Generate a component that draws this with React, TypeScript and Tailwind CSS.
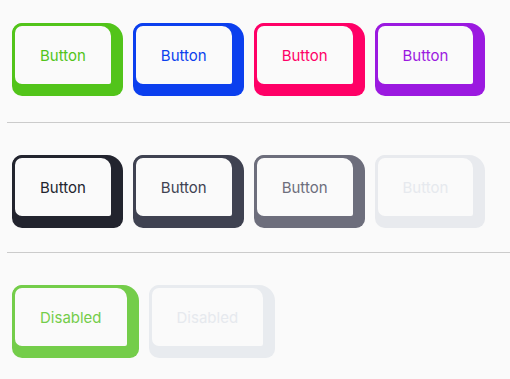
import React from 'react';

type Tone = {
  label: string;
  outer: string;
  border: string;
  text: string;
};

const rows: Tone[][] = [
  [
    { label: 'Button', outer: 'bg-[#52c41a]', border: 'border-[#52c41a]', text: 'text-[#52c41a]' },
    { label: 'Button', outer: 'bg-[#0b3fee]', border: 'border-[#0b3fee]', text: 'text-[#0b3fee]' },
    { label: 'Button', outer: 'bg-[#ff0066]', border: 'border-[#ff0066]', text: 'text-[#ff0066]' },
    { label: 'Button', outer: 'bg-[#9b19e0]', border: 'border-[#9b19e0]', text: 'text-[#9b19e0]' },
  ],
  [
    { label: 'Button', outer: 'bg-[#22242e]', border: 'border-[#22242e]', text: 'text-[#22242e]' },
    { label: 'Button', outer: 'bg-[#3f4251]', border: 'border-[#3f4251]', text: 'text-[#3f4251]' },
    { label: 'Button', outer: 'bg-[#6d6e7c]', border: 'border-[#6d6e7c]', text: 'text-[#6d6e7c]' },
    { label: 'Button', outer: 'bg-[#e8eaee]', border: 'border-[#e8eaee]', text: 'text-[#e6e9ee]' },
  ],
  [
    { label: 'Disabled', outer: 'bg-[#74cd4a]', border: 'border-[#74cd4a]', text: 'text-[#74cd4a]' },
    { label: 'Disabled', outer: 'bg-[#e8ebef]', border: 'border-[#e8ebef]', text: 'text-[#e6e9ee]' },
  ],
];

const ChunkyButton = ({ tone }: { tone: Tone }) => (
  <button
    type="button"
    className={`inline-flex rounded-[11px] rounded-tr-[16px] rounded-br-[9px] rounded-bl-[10px] pr-[9px] pb-[9px] ${tone.outer}`}
  >
    <span
      className={`flex h-[64px] items-center rounded-[10px] rounded-tr-[13px] rounded-br-[5px] border-[3px] bg-[#fafafa] px-[25px] text-[15px] leading-none ${tone.border} ${tone.text}`}
    >
      {tone.label}
    </span>
  </button>
);

export default function App() {
  return (
    <div
      className="min-h-screen bg-[#fafafa] pl-[7px]"
      style={{ fontFamily: 'Inter, "Noto Sans", sans-serif' }}
    >
      {rows.map((row, i) => (
        <div
          key={i}
          className={`flex gap-[10px] pl-[5px] ${
            i === 0 ? 'pt-[23px] pb-[26px] border-b border-[#cbcbcb]' : ''
          } ${i === 1 ? 'pt-[32px] pb-[24px] border-b border-[#cbcbcb]' : ''} ${
            i === 2 ? 'pt-[32px]' : ''
          }`}
        >
          {row.map((tone, j) => (
            <ChunkyButton key={j} tone={tone} />
          ))}
        </div>
      ))}
    </div>
  );
}
